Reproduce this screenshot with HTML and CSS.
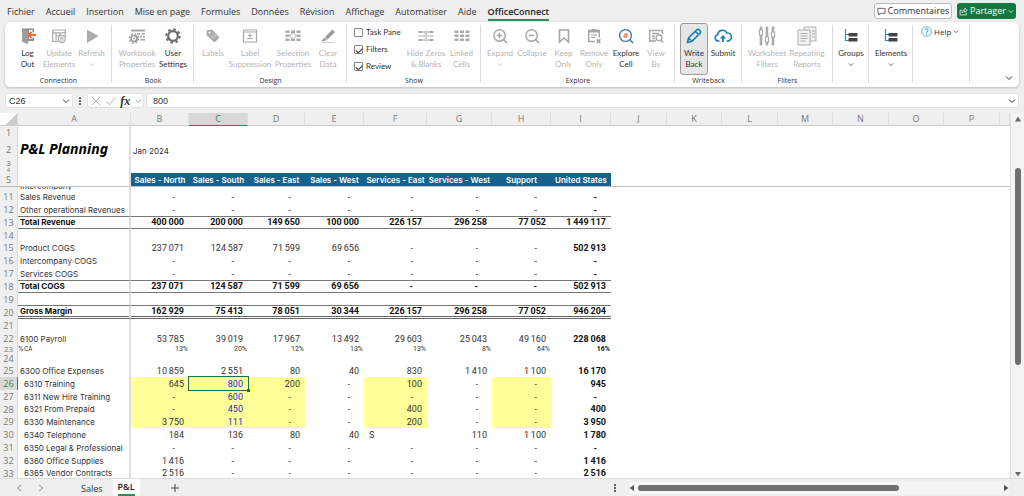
FILE: index.html
```html
<!DOCTYPE html>
<html lang="fr">
<head>
<meta charset="utf-8">
<title>P&amp;L Planning</title>
<link rel="stylesheet" href="styles.css">
</head>
<body>
<svg class="defs" aria-hidden="true">
  <symbol id="chev" viewBox="0 0 8 6"><path d="M1 1.500 4 4.500 7 1.500" fill="none" stroke="currentColor" stroke-width="1"/></symbol>
  <symbol id="tree" viewBox="0 0 16 16"><path d="M2.500 1v11.500H6M2.500 6.500H6" fill="none" stroke="#2a93c0" stroke-width="1.200"/><path d="M5.500 5h9v3.500h-9zM5.500 10h9v3.500h-9z" fill="#444"/></symbol>
</svg>
<div class="app">
<header class="menubar">
  <nav class="tabs">
    <a href="#">Fichier</a><a href="#">Accueil</a><a href="#">Insertion</a><a href="#">Mise en page</a><a href="#">Formules</a><a href="#">Données</a><a href="#">Révision</a><a href="#">Affichage</a><a href="#">Automatiser</a><a href="#">Aide</a><a href="#" class="current">OfficeConnect</a>
  </nav>
  <button class="comments"><svg viewBox="0 0 10 10"><path d="M1 1.500h8v5.500H4L2 9V7H1z" fill="none" stroke="#444" stroke-width=".9"/></svg>Commentaires</button>
  <button class="share"><svg viewBox="0 0 10 10"><path d="M3.500 3.500H1.200v5.300h7V6.500M3.500 6.500c0-2.500 1.500-3.500 3-3.500V1.200L9.300 3.800 6.500 6V4.500c-1.500 0-2.300.7-3 2z" fill="none" stroke="#fff" stroke-width=".8"/></svg>Partager<svg class="chev"><use href="#chev"/></svg></button>
</header>

<section class="ribbon">
  <div class="group g1"><div class="tools">
    <button><svg viewBox="0 0 16 16"><path d="M2 .5h12V5h-1.500V2H9v9h3.500V9H14v4H8.500L7 16 2 13z" fill="#8d8d8d"/><path d="M2 .5 8 3v13l-6-2.500z" fill="#9d9d9d"/><path d="M9 4.500h7v5H9z" fill="#fff"/><path d="M16 7H8.500M11.500 3.800 8.200 7l3.300 3.200" fill="none" stroke="#f26a2a" stroke-width="1.800"/></svg><span>Log<br>Out</span></button>
    <button disabled><svg viewBox="0 0 16 16"><path d="M1.700 2h12.600v7M1.700 2v11.500h6M1.700 4.800h12.600M5 4.800v8M5 8h4M9 4.800v3" fill="none" stroke="#aaa" stroke-width="1.200"/><circle cx="10.800" cy="11" r="3.600" fill="#eee" stroke="#aaa" stroke-width="1.200"/><path d="M9 11l2-1.500 1.500 1.500M11 9.500V13" fill="none" stroke="#aaa"/></svg><span>Update<br>Elements</span></button>
    <button disabled><svg viewBox="0 0 16 16"><path d="M3 1.500 14.500 8 3 15z" fill="#aaa"/></svg><span>Refresh</span><svg class="chev"><use href="#chev"/></svg></button>
  </div><h2>Connection</h2></div>

  <div class="group g2"><div class="tools">
    <button disabled><svg class="wide" viewBox="0 0 18 16"><path d="M3 1.500h14v2H3zM9 5h3v1.500H9zM13.500 5H17v1.500h-3.500zM12 8h2v1.500h-2zM15 8h2v1.500h-2zM12.500 11H17v1.500h-4.500z" fill="#a5a5a5"/><circle cx="6" cy="10.500" r="3" fill="#fff" stroke="#999" stroke-width="1.700"/><circle cx="6" cy="10.500" r="4.700" fill="none" stroke="#999" stroke-width="1.300" stroke-dasharray="2 1.690"/><circle cx="6" cy="10.500" r="1" fill="#999"/></svg><span>Workbook<br>Properties</span></button>
    <button><svg viewBox="0 0 16 16"><circle cx="8" cy="8" r="4.800" fill="none" stroke="#6b6b6b" stroke-width="2.200"/><circle cx="8" cy="8" r="6.700" fill="none" stroke="#6b6b6b" stroke-width="2" stroke-dasharray="2.600 2.660"/></svg><span>User<br>Settings</span></button>
  </div><h2>Book</h2></div>

  <div class="group g3"><div class="tools">
    <button disabled><svg viewBox="0 0 16 16"><path d="M1.500 2.500 7 1.500 14.500 9.500 9.500 14.500 1.500 7z" fill="#aaa"/><circle cx="4.500" cy="4.500" r="1.100" fill="#fff"/><path d="M6.500 8 9.500 11M8.500 6l3 3" stroke="#ddd"/></svg><span>Labels</span></button>
    <button disabled><svg viewBox="0 0 16 16"><path d="M1.500 2h13v12h-13z" fill="none" stroke="#aaa" stroke-width="1.200"/><path d="M2 4h12M5 10.500h6M8 5.500v4M6 7.500h4" stroke="#aaa" stroke-width="1.200"/></svg><span>Label<br>Suppression</span></button>
    <button disabled><svg viewBox="0 0 16 16"><path d="M.5 2.500h4V5h-4zM6 2.500h4V5H6zM11.500 2.500h4V5h-4zM.5 6.500h4V9h-4zM11.500 6.500h4V9h-4zM.5 10.500h4V13h-4zM6 10.500h4V13H6zM11.500 10.500h4V13h-4z" fill="#aaa"/><circle cx="8" cy="8" r="2.500" fill="none" stroke="#bbb"/></svg><span>Selection<br>Properties</span></button>
    <button disabled><svg viewBox="0 0 16 16"><path d="M12.500 1.500 15 4 7.500 11.500 5 9zM4.500 9.500 7 12 2.500 13.500 2 12.500z" fill="#999"/><path d="M1.500 14.500h13" stroke="#ccc"/></svg><span>Clear<br>Data</span></button>
  </div><h2>Design</h2></div>

  <div class="group g4"><div class="tools">
    <div class="checks">
      <label><input type="checkbox">Task Pane</label>
      <label><input type="checkbox" checked>Filters</label>
      <label><input type="checkbox" checked>Review</label>
    </div>
    <button disabled><svg viewBox="0 0 16 16"><path d="M.5 3h4v2h-4zM11.500 3h4v2h-4zM.5 11h4v2h-4zM11.500 11h4v2h-4zM5.500 3h1.200v2H5.500zM9.500 3h1.200v2H9.500zM5.500 11h1.200v2H5.500zM9.500 11h1.200v2H9.500zM.5 7.500h15v1H.5zM7.600 2.500h1V6h-1zM7.600 10h1v3.500h-1zM6.500 5.500h3L8.100 7zM6.500 10.500h3L8.100 9z" fill="#aaa"/></svg><span>Hide Zeros<br>&amp; Blanks</span></button>
    <button disabled><svg viewBox="0 0 16 16"><path d="M.5 2.500h4V5h-4zM6 2.500h4V5H6zM11.500 2.500h4V5h-4zM.5 6.500h4V9h-4zM6 6.500h4V9H6zM11.500 6.500h4V9h-4zM.5 10.500h4V13h-4zM6 10.500h4V13H6zM11.500 10.500h4V13h-4z" fill="#aaa"/></svg><span>Linked<br>Cells</span></button>
  </div><h2>Show</h2></div>

  <div class="group g5"><div class="tools">
    <button disabled><svg viewBox="0 0 16 16"><circle cx="7.500" cy="7.500" r="5.700" fill="none" stroke="#a5a5a5" stroke-width="1.500"/><path d="M11.500 11.500 15 15M4.800 7.500h5.400M7.500 4.800v5.400" stroke="#a5a5a5" stroke-width="1.500"/></svg><span>Expand</span><svg class="chev"><use href="#chev"/></svg></button>
    <button disabled><svg viewBox="0 0 16 16"><circle cx="7.500" cy="7.500" r="5.700" fill="none" stroke="#a5a5a5" stroke-width="1.500"/><path d="M11.500 11.500 15 15M4.800 7.500h5.400" stroke="#a5a5a5" stroke-width="1.500"/></svg><span>Collapse</span></button>
    <button disabled><svg viewBox="0 0 16 16"><path d="M3.500 2h9v12L8 10l-4.500 4z" fill="none" stroke="#a5a5a5" stroke-width="1.600"/></svg><span>Keep<br>Only</span></button>
    <button disabled><svg viewBox="0 0 16 16"><path d="M9 13.500H2.700v-11h10.600v7" fill="none" stroke="#a5a5a5" stroke-width="1.400"/><path d="M5.500 1h5v2.500h-5zM2.500 2.500h11v2h-11zM5 6.500h6v1H5zM5 9h4v1H5z" fill="#a5a5a5"/><path d="M10.800 11.300l3.500 3.500M14.300 11.300l-3.500 3.500" stroke="#a5a5a5" stroke-width="1.700"/></svg><span>Remove<br>Only</span></button>
    <button><svg viewBox="0 0 16 16"><circle cx="7.500" cy="7.500" r="5.900" fill="none" stroke="#477da6" stroke-width="1.400"/><path d="M11.500 11.500 15 15" stroke="#477da6" stroke-width="1.700"/><path d="M5.500 6.700h4.500M5 8.500h4.500M7.200 5 6.500 10M9 5l-.7 5" stroke="#f08550" stroke-width="1.100"/></svg><span>Explore<br>Cell</span></button>
    <button disabled><svg viewBox="0 0 16 16"><path d="M8 13H1.700V2.500h12.600V6M4 5.500h7M4 8h3M4 10.500h3" fill="none" stroke="#a5a5a5" stroke-width="1.400"/><circle cx="11" cy="9.700" r="2.900" fill="none" stroke="#a5a5a5" stroke-width="1.400"/><path d="M13 12l2 2.500" stroke="#a5a5a5" stroke-width="1.600"/></svg><span>View<br>By</span></button>
  </div><h2>Explore</h2></div>

  <div class="group g6"><div class="tools">
    <button class="pressed"><svg viewBox="0 0 16 16"><path d="M1.500 14.500l1-4.500L11 1.700q1-.8 2 0l1.200 1.200q.8 1 0 2L6 13.300zM9.500 3.500l3 3M3 10.500l2.700 2.500" fill="none" stroke="#1b7fb0" stroke-width="1.600"/></svg><span>Write<br>Back</span></button>
    <button><svg class="wide" viewBox="0 0 18 16"><path d="M5.500 13H4a3.200 3.200 0 0 1-.3-6.300A4.800 4.800 0 0 1 12.800 5 4 4 0 0 1 14 13h-1.500" fill="none" stroke="#1b7fb0" stroke-width="1.600"/><path d="M9 14V9" stroke="#1b7fb0" stroke-width="1.800"/><path d="M5.800 10.500 9 7l3.200 3.500z" fill="#1b7fb0"/></svg><span>Submit</span></button>
  </div><h2>Writeback</h2></div>

  <div class="group g7"><div class="tools">
    <button disabled><svg class="big" viewBox="0 0 18 20"><path d="M3 .5v19M9 .5v19M15 .5v19" stroke="#aaa" stroke-width="2.600"/><path d="M1.500 4h3v5h-3zM7.500 11h3v5h-3zM13.500 6h3v5h-3z" fill="#fff" stroke="#aaa" stroke-width="1.200"/></svg><span>Worksheet<br>Filters</span></button>
    <button disabled><svg class="big" viewBox="0 0 20 20"><path d="M7 1h12v14H7z" fill="#eee" stroke="#b5b5b5"/><path d="M1 4h12v15H1z" fill="#f3f3f3" stroke="#aaa"/><path d="M3.500 7.500h7M3.500 10h7M3.500 12.500h7M3.500 15h5M15 5h3M15 8h3M15 11h3" stroke="#aaa"/></svg><span>Repeating<br>Reports</span></button>
  </div><h2>Filters</h2></div>

  <div class="group g8"><div class="tools"><button><svg viewBox="0 0 16 16"><use href="#tree"/></svg><span>Groups</span><svg class="chev"><use href="#chev"/></svg></button></div></div>
  <div class="group g9"><div class="tools"><button><svg viewBox="0 0 16 16"><use href="#tree"/></svg><span>Elements</span><svg class="chev"><use href="#chev"/></svg></button></div></div>
  <div class="group g10"><button class="help"><svg viewBox="0 0 12 12"><circle cx="6" cy="6" r="5.200" fill="none" stroke="#4ba3dd"/><path d="M4.300 4.700a1.700 1.700 0 1 1 2.500 1.500q-.8.400-.8 1.200M6 8.300v1.200" fill="none" stroke="#4ba3dd" stroke-width="1.100"/></svg>Help<svg class="chev"><use href="#chev"/></svg></button></div>
  <button class="fold" aria-label="Réduire le ruban"><svg class="chev"><use href="#chev"/></svg></button>
</section>

<section class="formula">
  <div class="box name"><input type="text" value="C26" aria-label="Zone Nom"><svg class="chev"><use href="#chev"/></svg></div>
  <span class="dots"><i></i><i></i><i></i></span>
  <div class="box fx"><svg viewBox="0 0 10 10"><path d="M1 1l8 8M9 1 1 9" stroke="#b5b5b5"/></svg><svg viewBox="0 0 10 10"><path d="M.5 5.500 3.500 8.500 9.500 1.500" fill="none" stroke="#b5b5b5"/></svg><em>fx</em><svg class="chev pale"><use href="#chev"/></svg></div>
  <div class="box value"><input type="text" value="800" aria-label="Barre de formule"><svg class="chev"><use href="#chev"/></svg></div>
</section>

<main class="work">
<div class="sheet">
<table>
<colgroup><col class="cn"><col class="ca"><col class="cb"><col class="cc"><col class="cd"><col class="cc"><col class="cf"><col class="cg"><col class="cc"><col class="ci"><col class="cj"><col class="ck"><col class="cj"><col class="ck"><col class="cj"><col class="ck"><col class="cj"><col></colgroup>
<thead><tr><th class="corner"></th><th>A</th><th>B</th><th class="on">C</th><th>D</th><th>E</th><th>F</th><th>G</th><th>H</th><th>I</th><th>J</th><th>K</th><th>L</th><th>M</th><th>N</th><th>O</th><th>P</th><th></th></tr></thead>
<tbody>
<tr><th>1</th><td></td></tr>
<tr class="h19"><th>2</th><td class="title">P&amp;L Planning</td><td class="t">Jan 2024</td></tr>
<tr class="h9"><th>3</th><td></td></tr>
<tr class="h6"><th><div>4</div></th><td></td></tr>
<tr class="head"><th>5</th><td></td><td>Sales - North</td><td>Sales - South</td><td>Sales - East</td><td>Sales - West</td><td>Services - East</td><td>Services - West</td><td>Support</td><td>United States</td><td colspan="8" class="rest"></td></tr>
<tr class="h3"><th></th><td><div>Intercompany</div></td></tr>
<tr><th>11</th><td>Sales Revenue</td><td class="d">-</td><td class="d">-</td><td class="d">-</td><td class="d">-</td><td class="d">-</td><td class="d">-</td><td class="d">-</td><td class="d">-</td></tr>
<tr><th>12</th><td>Other operational Revenues</td><td class="d">-</td><td class="d">-</td><td class="d">-</td><td class="d">-</td><td class="d">-</td><td class="d">-</td><td class="d">-</td><td class="d">-</td></tr>
<tr class="total"><th>13</th><td>Total Revenue</td><td>400&thinsp;000</td><td>200&thinsp;000</td><td>149&thinsp;650</td><td>100&thinsp;000</td><td>226&thinsp;157</td><td>296&thinsp;258</td><td>77&thinsp;052</td><td>1&thinsp;449&thinsp;117</td></tr>
<tr class="h12"><th>14</th><td></td></tr>
<tr><th>15</th><td>Product COGS</td><td>237&thinsp;071</td><td>124&thinsp;587</td><td>71&thinsp;599</td><td>69&thinsp;656</td><td class="d">-</td><td class="d">-</td><td class="d">-</td><td>502&thinsp;913</td></tr>
<tr><th>16</th><td>Intercompany COGS</td><td class="d">-</td><td class="d">-</td><td class="d">-</td><td class="d">-</td><td class="d">-</td><td class="d">-</td><td class="d">-</td><td class="d">-</td></tr>
<tr><th>17</th><td>Services COGS</td><td class="d">-</td><td class="d">-</td><td class="d">-</td><td class="d">-</td><td class="d">-</td><td class="d">-</td><td class="d">-</td><td class="d">-</td></tr>
<tr class="total"><th>18</th><td>Total COGS</td><td>237&thinsp;071</td><td>124&thinsp;587</td><td>71&thinsp;599</td><td>69&thinsp;656</td><td class="d">-</td><td class="d">-</td><td class="d">-</td><td>502&thinsp;913</td></tr>
<tr class="h12"><th>19</th><td></td></tr>
<tr class="total grand"><th>20</th><td>Gross Margin</td><td>162&thinsp;929</td><td>75&thinsp;413</td><td>78&thinsp;051</td><td>30&thinsp;344</td><td>226&thinsp;157</td><td>296&thinsp;258</td><td>77&thinsp;052</td><td>946&thinsp;204</td></tr>
<tr><th>21</th><td></td></tr>
<tr><th>22</th><td>6100 Payroll</td><td>53&thinsp;785</td><td>39&thinsp;019</td><td>17&thinsp;967</td><td>13&thinsp;492</td><td>29&thinsp;603</td><td>25&thinsp;043</td><td>49&thinsp;160</td><td>228&thinsp;068</td></tr>
<tr class="pct"><th>23</th><td>%CA</td><td>13%</td><td>20%</td><td>12%</td><td>13%</td><td>13%</td><td>8%</td><td>64%</td><td>16%</td></tr>
<tr class="h11"><th>24</th><td></td></tr>
<tr><th>25</th><td>6300 Office Expenses</td><td>10&thinsp;859</td><td>2&thinsp;551</td><td>80</td><td>40</td><td>830</td><td>1&thinsp;410</td><td>1&thinsp;100</td><td>16&thinsp;170</td></tr>
<tr class="sub"><th class="on">26</th><td>6310 Training</td><td class="y">645</td><td class="y in sel">800</td><td class="y">200</td><td class="d">-</td><td class="y">100</td><td class="d">-</td><td class="y d">-</td><td>945</td></tr>
<tr class="sub"><th>27</th><td>6311 New Hire Training</td><td class="y d">-</td><td class="y in">600</td><td class="y d">-</td><td class="d">-</td><td class="y d">-</td><td class="d">-</td><td class="y d">-</td><td class="d">-</td></tr>
<tr class="sub h12"><th>28</th><td>6321 From Prepaid</td><td class="y d">-</td><td class="y in">450</td><td class="y d">-</td><td class="d">-</td><td class="y">400</td><td class="d">-</td><td class="y d">-</td><td>400</td></tr>
<tr class="sub"><th>29</th><td>6330 Maintenance</td><td class="y">3&thinsp;750</td><td class="y in">111</td><td class="y d">-</td><td class="d">-</td><td class="y">200</td><td class="d">-</td><td class="y d">-</td><td>3&thinsp;950</td></tr>
<tr class="sub"><th>30</th><td>6340 Telephone</td><td>184</td><td>136</td><td>80</td><td>40</td><td class="s">S</td><td>110</td><td>1&thinsp;100</td><td>1&thinsp;780</td></tr>
<tr class="sub"><th>31</th><td>6350 Legal &amp; Professional</td><td class="d">-</td><td class="d">-</td><td class="d">-</td><td class="d">-</td><td class="d">-</td><td class="d">-</td><td class="d">-</td><td class="d">-</td></tr>
<tr class="sub"><th>32</th><td>6360 Office Supplies</td><td>1&thinsp;416</td><td class="d">-</td><td class="d">-</td><td class="d">-</td><td class="d">-</td><td class="d">-</td><td class="d">-</td><td>1&thinsp;416</td></tr>
<tr class="sub h12"><th>33</th><td>6365 Vendor Contracts</td><td>2&thinsp;516</td><td class="d">-</td><td class="d">-</td><td class="d">-</td><td class="d">-</td><td class="d">-</td><td class="d">-</td><td>2&thinsp;516</td></tr>
</tbody>
</table>
</div>
<div class="vscroll"><svg viewBox="0 0 6 6"><path d="M3 .5 6 5.500H0z" fill="#666"/></svg><div class="track"><div class="thumb"></div></div><svg viewBox="0 0 6 6"><path d="M0 1h6L3 5.500z" fill="#666"/></svg></div>
</main>

<footer class="sheets">
  <div class="arrows"><svg viewBox="0 0 6 8"><path d="M5 1 1.500 4 5 7" fill="none" stroke="#aaa" stroke-width="1.100"/></svg><svg viewBox="0 0 6 8"><path d="M1 1l3.500 3L1 7" fill="none" stroke="#aaa" stroke-width="1.100"/></svg></div>
  <button class="tab">Sales</button><button class="tab active"><span>P&amp;L</span></button>
  <button class="add" aria-label="Nouvelle feuille"><svg viewBox="0 0 8 8"><path d="M4 0v8M0 4h8" stroke="#444"/></svg></button>
  <span class="dots"><i></i><i></i><i></i></span>
  <div class="hscroll"><svg viewBox="0 0 6 6"><path d="M.5 3 5 0v6z" fill="#555"/></svg><div class="track"><div class="thumb"></div></div><svg viewBox="0 0 6 6"><path d="M5.500 3 1 0v6z" fill="#555"/></svg></div>
</footer>
</div>
</body>
</html>
```
FILE: styles.css
```css
* { box-sizing: border-box; }
body { margin: 0; background: #efefef; color: #333; font: 9px/12px "Open Sans", "Noto Sans", sans-serif; }
button, input { font: inherit; color: inherit; border: 0; background: none; padding: 0; margin: 0; }
.defs { position: absolute; width: 0; height: 0; }
.app { display: flex; flex-direction: column; height: 100vh; overflow: hidden; }
.chev { width: 6px; height: 5px; flex: none; }

.menubar { display: flex; align-items: center; height: 22px; padding-right: 8px; flex: none; }
.tabs { display: flex; gap: 11px; padding-left: 7px; flex: 1; }
.tabs a { color: #333; text-decoration: none; line-height: 14px; padding-top: 3px; border-bottom: 2px solid transparent; }
.tabs .current { font-weight: 600; color: #222; border-color: #2f8a5b; }
.comments, .share { display: flex; align-items: center; justify-content: center; height: 16px; border-radius: 3px; font-weight: 500; }
.comments svg:first-child, .share svg:first-child { width: 9px; height: 9px; flex: none; }
.comments { width: 78px; gap: 2px; background: #fff; border: 1px solid #bbb; margin-right: 5px; }
.share { width: 59px; gap: 2px; background: #127a3e; color: #fff; }

.ribbon { display: flex; height: 65px; margin: 0 5px; background: #fff; border-radius: 5px; box-shadow: 0 1px 3px #bbb; flex: none; padding-top: 1px; }
.group { display: flex; flex-direction: column; position: relative; flex: none; }
.group::after { content: ""; position: absolute; right: 0; top: 2px; bottom: 4px; border-right: 1px solid #dcdcdc; }
.tools { display: grid; height: 52px; }
.tools button { display: flex; flex-direction: column; align-items: center; padding-top: 5px; font: 8px/11px Lato, sans-serif; color: #333; white-space: nowrap; min-width: 0; }
.tools button > span { margin-top: 4px; text-align: center; }
.tools button > svg:first-child { width: 16px; height: 16px; flex: none; }
.tools button > svg.wide:first-child { width: 18px; }
.tools button > svg.big:first-child { width: 20px; height: 20px; margin: -2px 0; }
.tools .chev { margin-top: 3px; }
.tools button:disabled { color: #b4b4b4; }
.tools .pressed { background: #e6e6e6; border: 1px solid #999; border-radius: 3px; padding-top: 4px; }
.group h2 { margin: 0; font: 7px/12px "Open Sans", sans-serif; color: #333; text-align: center; }
.g1 { width: 107px; } .g1 .tools { grid-template-columns: 31px 32px 33px; padding-left: 7px; }
.g2 { width: 82px; } .g2 .tools { grid-template-columns: 40px 32px; padding-left: 5px; }
.g3 { width: 153px; } .g3 .tools { grid-template-columns: 30px 44px 42px 28px; padding-left: 4px; }
.g4 { width: 134px; } .g4 .tools { grid-template-columns: 51px 42px 29px; padding-left: 7px; }
.g5 { width: 194px; } .g5 .tools { grid-template-columns: 32px 32px 31px 30px 34px 26px; padding-left: 3px; }
.g6 { width: 67px; } .g6 .tools { grid-template-columns: 28px 30px; padding-left: 5px; }
.g7 { width: 91px; } .g7 .tools { grid-template-columns: 40px 40px; padding-left: 5px; }
.g8 { width: 36px; } .g9 { width: 44px; } .g10 { width: 57px; }
.checks { display: flex; flex-direction: column; gap: 6px; padding-top: 4px; font: 8px/11px Lato, sans-serif; white-space: nowrap; }
.checks label { display: flex; align-items: center; gap: 3px; }
.checks input { appearance: none; width: 9px; height: 9px; border: 1px solid #888; border-radius: 1px; background: #fff; display: grid; place-items: center; }
.checks input:checked::after { content: ""; width: 5px; height: 3px; border: solid #333; border-width: 0 0 1px 1px; transform: rotate(-45deg); }
.help { display: flex; align-items: center; gap: 2px; padding: 3px 0 0 8px; font: 8px/11px "Open Sans", sans-serif; }
.help svg:first-child { width: 11px; height: 11px; }
.fold { margin: auto 6px 6px auto; display: flex; }
.fold .chev, .name .chev, .value .chev { width: 8px; height: 6px; }

.formula { display: flex; align-items: center; padding: 6px 5px 5px; flex: none; }
.box { display: flex; align-items: center; height: 15px; background: #fff; border: 1px solid #e2e2e2; border-radius: 3px; }
.box input { flex: 1; min-width: 0; font: 9px/12px "Liberation Sans", sans-serif; outline: none; }
.name { width: 68px; padding: 0 2px 0 3px; }
.fx { width: 57px; justify-content: space-between; padding: 0 1px 0 3px; }
.fx svg { width: 10px; height: 10px; flex: none; }
.fx em { font: italic bold 12px/12px "Liberation Serif", serif; }
.fx .pale { width: 7px; height: 6px; color: #999; }
.value { flex: 1; margin-left: 2px; padding: 0 2px 0 6px; }
.dots { display: flex; flex-direction: column; gap: 1px; }
.dots i { width: 2px; height: 2px; background: #666; }
.formula .dots { margin: 0 6px; }

.work { display: flex; flex: 1; min-height: 0; }
.sheet { flex: 1; min-width: 0; overflow: hidden; background: #fff; border-right: 1px solid #ddd; }
table { width: 100%; table-layout: fixed; border-collapse: separate; border-spacing: 0; }
.cn { width: 18px; } .ca { width: 113px; } .cb { width: 58px; } .cc { width: 59px; } .cd { width: 57px; }
.cf { width: 63px; } .cg { width: 65px; } .ci { width: 60px; } .cj { width: 56px; } .ck { width: 55px; }
td, th { padding: 0; white-space: nowrap; }
tr { height: 13px; }
th { font: 9px/11px "Open Sans", sans-serif; color: #777; background: #efefef; border-right: 1px solid #ddd; text-align: center; }
thead th { border-bottom: 1px solid #ccc; line-height: 12px; }
thead .on { background: #d8d8d8; color: #2f8a5b; border-bottom-color: #2f8a5b; }
tbody .on { background: #d8d8d8; color: #2f8a5b; border-right-color: #2f8a5b; }
.corner { background: linear-gradient(135deg, transparent 62%, #ccc 62%); }
td { font: 9px/11px Roboto, sans-serif; color: #333; text-align: right; padding: 1px 5px 0 0; }
td:nth-child(2) { font: 8px/11px Inter, sans-serif; text-align: left; padding: 1px 0 0 2px; border-right: 2px solid #dedede; }
td:nth-child(10) { font-weight: 700; color: #111; }
td.d { padding-right: 14px; }
tr.sub td:nth-child(2) { padding-left: 6px; }
tr .title.title { font: italic bold 14px/18px "Noto Sans", sans-serif; color: #000; }
tr .t.t { font: 8px/11px Inter, sans-serif; text-align: left; padding: 5px 0 0 2px; }
.h19 { height: 19px; }
.h19 th { padding-top: 2px; }
.h12 { height: 12px; }
.h11 { height: 11px; }
.h11 th { line-height: 10px; }
.h11 td, .h9 td, .h6 td, .h3 td:nth-child(2) { padding-top: 0; }
.h9 { height: 9px; }
.h9 th { line-height: 8px; font-size: 8px; }
.h6 { height: 6px; }
.h6 div { height: 6px; line-height: 6px; font-size: 6px; overflow: hidden; }
.h3 { height: 3px; }
.h3 div { height: 3px; overflow: hidden; display: flex; align-items: flex-end; line-height: 8px; }
.head { height: 14px; }
.head > * { border-bottom: 1px solid #c0c0c0; }
.head td:nth-child(n+3) { background: #17618a; color: #fff; font: 600 8px/12px Inter, sans-serif; text-align: center; padding: 1px 0 0; }
.head .rest.rest { background: #fff; }
.total td { font-weight: 700; color: #111; border-top: 1px solid #777; border-bottom: 1px solid #777; padding-top: 0; }
.total td:nth-child(2) { font-weight: 700; color: #111; padding-top: 0; }
tr.grand { height: 14px; }
.grand td { border-bottom: 3px double #666; line-height: 10px; }
.grand td:nth-child(2) { line-height: 10px; }
.pct { height: 8px; }
.pct th { line-height: 8px; font-size: 8px; }
.pct td { font-size: 7px; line-height: 8px; padding: 0 1px 0 0; }
.pct td:nth-child(2) { font-size: 6px; line-height: 8px; padding-top: 0; }
.y { background: #ffff99; }
td.in { color: #2a2ad8; }
.sel { position: relative; outline: 1px solid #1e7145; }
.sel::after { content: ""; position: absolute; right: -2px; bottom: -2px; width: 3px; height: 3px; background: #1e7145; }
.s.s { text-align: left; padding-left: 5px; }
.vscroll { width: 13px; background: #f3f3f3; display: flex; flex-direction: column; align-items: center; padding: 3px 0 1px; }
.vscroll svg, .hscroll svg { width: 6px; height: 6px; flex: none; }
.vscroll .track { flex: 1; padding-top: 46px; }
.vscroll .thumb { width: 6px; height: 65%; border-radius: 3px; background: #707070; }

.sheets { display: flex; align-items: center; height: 18px; background: #efefef; border-top: 1px solid #ddd; flex: none; padding-right: 15px; }
.arrows { display: flex; gap: 16px; padding-left: 16px; width: 71px; }
.arrows svg { width: 6px; height: 8px; }
.tab { height: 17px; font-size: 9px; padding: 3px 10px 0; }
.tab.active { background: #fff; font-weight: 600; color: #222; padding: 0 5px; border-radius: 0 0 3px 3px; }
.tab.active span { display: block; line-height: 14px; border-bottom: 2px solid #2f8a5b; }
.add { display: flex; margin-left: 31px; }
.add svg { width: 8px; height: 8px; }
.sheets .dots { margin-left: auto; margin-right: 13px; }
.hscroll { display: flex; align-items: center; flex: 0 0 380px; background: #f5f5f5; height: 12px; }
.hscroll .track { flex: 1; padding: 0 3px; }
.hscroll .thumb { width: 72%; height: 6px; border-radius: 3px; background: #707070; }
```
